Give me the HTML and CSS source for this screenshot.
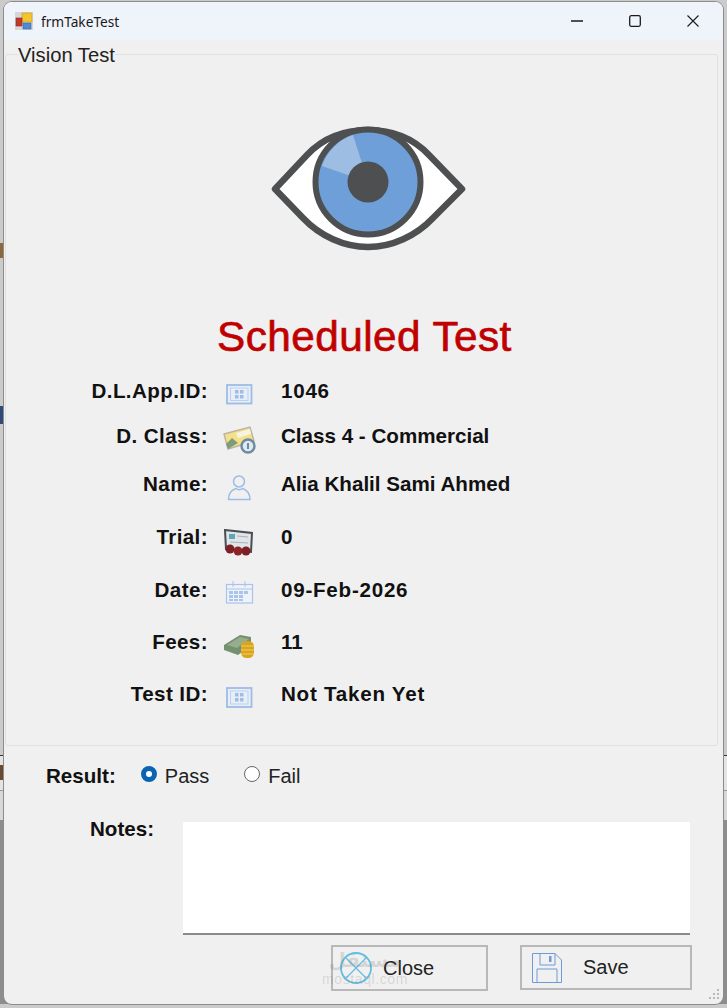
FILE: index.html
```html
<!DOCTYPE html>
<html lang="en">
<head>
<meta charset="utf-8">
<title>frmTakeTest</title>
<link rel="stylesheet" href="styles.css">
</head>
<body>
<div class="desktop">
  <div class="bg-band bg-band-light"></div>
  <div class="bg-band bg-band-mid"></div>
  <div class="bg-band bg-band-dark"></div>
  <div class="bg-frag bg-frag-a"></div>
  <div class="bg-frag bg-frag-b"></div>
  <div class="bg-frag bg-frag-c"></div>

  <main class="window">
    <header class="titlebar">
      <svg class="app-icon" viewBox="0 0 18 18">
        <rect x="0" y="0" width="18" height="18" fill="#d6d6d6"/>
        <rect x="7" y="1" width="10" height="9" fill="#f4c430" stroke="#c99a1a" stroke-width=".6"/>
        <rect x="1" y="6" width="6" height="8" fill="#c0392b" stroke="#8e2a20" stroke-width=".6"/>
        <rect x="8" y="11" width="8" height="6" fill="#4f8ad6" stroke="#35669f" stroke-width=".6"/>
      </svg>
      <span class="app-title">frmTakeTest</span>
      <div class="controls">
        <svg class="ctl ctl-min" viewBox="0 0 12 12"><path d="M0 6H12" stroke="#1a1a1a" stroke-width="1.3"/></svg>
        <svg class="ctl ctl-max" viewBox="0 0 12 12"><rect x=".7" y=".7" width="10.6" height="10.6" rx="1.5" fill="none" stroke="#1a1a1a" stroke-width="1.3"/></svg>
        <svg class="ctl ctl-close" viewBox="0 0 12 12"><path d="M.5 .5L11.5 11.5M11.5 .5L.5 11.5" stroke="#1a1a1a" stroke-width="1.1"/></svg>
      </div>
    </header>

    <fieldset class="group">
      <legend class="group-title">Vision Test</legend>

      <svg class="eye" viewBox="268 124 200 130">
        <path d="M275 189 L307 155 C323 138 345 130 368 130 C391 130 413 138 429 155 L462 189 L433 218 C416 236 392 247 368 247 C344 247 320 236 303 218 Z" fill="#fff" stroke="#4d4f51" stroke-width="6.500" stroke-linejoin="round"/>
        <circle cx="368" cy="182" r="52.500" fill="#6f9fd8" stroke="#4d4f51" stroke-width="6"/>
        <path d="M368 182 L353 135 A49.500 49.500 0 0 0 322 166 Z" fill="#9dbde3"/>
        <circle cx="368" cy="182" r="20.500" fill="#4d4f51"/>
      </svg>

      <h1 class="heading">Scheduled Test</h1>

      <div class="info">
        <span class="info-label">D.L.App.ID:</span>
        <svg class="info-icon" viewBox="222 378 34 32">
          <rect x="227" y="385" width="24.500" height="18.500" fill="#e8eef7" stroke="#9dbce6" stroke-width="1.800"/>
          <rect x="230.500" y="388" width="17.500" height="12.500" fill="none" stroke="#bdd1ec"/>
          <g fill="#9dbce6"><rect x="235" y="390" width="3.500" height="3.500"/><rect x="240" y="390" width="3.500" height="3.500"/><rect x="235" y="395" width="3.500" height="3.500"/><rect x="240" y="395" width="3.500" height="3.500"/></g>
        </svg>
        <span class="info-value info-value-wide">1046</span>

        <span class="info-label">D. Class:</span>
        <svg class="info-icon" viewBox="222 423 34 32">
          <path d="M224 434 L250 427 L254 441 L228 449 Z" fill="#f5e08a" stroke="#b8b3a3" stroke-width="1.400"/>
          <path d="M226 444 L232 438 L238 443 L228 449 Z" fill="#7f9c78"/>
          <path d="M236 433 L250 429 L251 434 L238 438 Z" fill="#f7f3df"/>
          <circle cx="248" cy="446" r="6.500" fill="#dfe9f2" stroke="#6f8aa0" stroke-width="2.400"/>
          <rect x="247" y="443" width="2" height="6" fill="#6f8aa0"/>
        </svg>
        <span class="info-value">Class 4 - Commercial</span>

        <span class="info-label">Name:</span>
        <svg class="info-icon" viewBox="222 471 34 32">
          <circle cx="239" cy="481.500" r="5.500" fill="none" stroke="#9dbce6" stroke-width="1.500"/>
          <path d="M228.500 499.500 C228.500 492 233 489.500 236 488.500 C238 490 240.500 490 242.500 488.500 C245.500 489.500 250 492 250 499.500 Z" fill="none" stroke="#9dbce6" stroke-width="1.500"/>
        </svg>
        <span class="info-value">Alia Khalil Sami Ahmed</span>

        <span class="info-label">Trial:</span>
        <svg class="info-icon" viewBox="222 524 34 32">
          <path d="M225 530 L252 533 L251 552 L226 549 Z" fill="#dfe5e8" stroke="#4a4e52" stroke-width="2"/>
          <rect x="229" y="534" width="6" height="5" fill="#5fa6b8"/>
          <path d="M237 536 L248 537 M230 542 L248 543" stroke="#aab3b8"/>
          <circle cx="230" cy="549" r="4.500" fill="#7d1f24"/>
          <circle cx="238" cy="551" r="4.500" fill="#8a2428"/>
          <circle cx="246" cy="551" r="4.500" fill="#7d1f24"/>
        </svg>
        <span class="info-value">0</span>

        <span class="info-label">Date:</span>
        <svg class="info-icon" viewBox="222 577 34 32">
          <rect x="226.500" y="584.500" width="26" height="18.500" fill="#eef3fa" stroke="#a9c4e8" stroke-width="1.200"/>
          <path d="M226.500 589H252.500M233 581V587M245 581V587" stroke="#a9c4e8"/>
          <g fill="#a9c4e8"><rect x="229" y="591" width="4" height="3"/><rect x="234" y="591" width="4" height="3"/><rect x="239" y="591" width="4" height="3"/><rect x="244" y="591" width="4" height="3"/><rect x="229" y="595" width="4" height="3"/><rect x="234" y="595" width="4" height="3"/><rect x="239" y="595" width="4" height="3"/><rect x="229" y="599" width="4" height="2"/><rect x="234" y="599" width="4" height="2"/><rect x="239" y="599" width="4" height="2"/></g>
        </svg>
        <span class="info-value info-value-wide">09-Feb-2026</span>

        <span class="info-label">Fees:</span>
        <svg class="info-icon" viewBox="222 629 34 32">
          <path d="M224 645 L240 635 L251 637 L251 645 L238 655 L224 650 Z" fill="#74906f"/>
          <path d="M227 645 L240 637 L249 639 L237 648 Z" fill="#96ad8e"/>
          <rect x="241" y="641" width="13" height="17" rx="5.500" fill="#d9a520"/>
          <path d="M241 646 H254 M241 650 H254 M241 654 H254" stroke="#f2ce5a"/>
        </svg>
        <span class="info-value">11</span>

        <span class="info-label">Test ID:</span>
        <svg class="info-icon" viewBox="222 681 34 32">
          <rect x="227" y="688" width="24.500" height="19" fill="#e8eef7" stroke="#9dbce6" stroke-width="1.800"/>
          <rect x="230.500" y="691" width="17.500" height="13" fill="none" stroke="#bdd1ec"/>
          <g fill="#9dbce6"><rect x="235" y="693" width="3.500" height="3.500"/><rect x="240" y="693" width="3.500" height="3.500"/><rect x="235" y="698" width="3.500" height="3.500"/><rect x="240" y="698" width="3.500" height="3.500"/></g>
        </svg>
        <span class="info-value info-value-wide">Not Taken Yet</span>
      </div>
    </fieldset>

    <div class="result-row">
      <span class="field-label">Result:</span>
      <span class="radio radio-on"></span><span class="radio-text radio-text-pass">Pass</span>
      <span class="radio"></span><span class="radio-text">Fail</span>
    </div>

    <div class="notes-row">
      <span class="field-label notes-label">Notes:</span>
      <div class="notes-box"></div>
    </div>

    <div class="actions">
      <div class="btn btn-close">
        <svg class="btn-icon-close" viewBox="0 0 32 32">
          <circle cx="16" cy="16" r="15" fill="none" stroke="#62bde0" stroke-width="1.800"/>
          <path d="M6 6L26 26M26 6L6 26" stroke="#62bde0" stroke-width="1.200"/>
        </svg>
        <span>Close</span>
      </div>
      <div class="btn btn-save">
        <svg class="btn-icon-save" viewBox="0 0 30 30">
          <path d="M.5 .5H23L29.500 7V29.500H.5Z" fill="none" stroke="#6c9bd8"/>
          <path d="M8 .5V12H23V.5M5 29.500V16H25V29.500" fill="none" stroke="#6c9bd8"/>
          <rect x="17" y="3" width="2.500" height="6" fill="#6c9bd8"/>
        </svg>
        <span>Save</span>
      </div>
    </div>

    <div class="watermark">
      <span class="wm-ar">مستقل</span>
      <span class="wm-en">mostaql.com</span>
    </div>

    <svg class="grip" viewBox="0 0 12 12">
      <g fill="#b8b8b8"><rect x="9" y="0" width="2" height="2"/><rect x="5" y="4" width="2" height="2"/><rect x="9" y="4" width="2" height="2"/><rect x="1" y="8" width="2" height="2"/><rect x="5" y="8" width="2" height="2"/><rect x="9" y="8" width="2" height="2"/></g>
    </svg>
  </main>
</div>
</body>
</html>
```
FILE: styles.css
```css
* { box-sizing: border-box; }

html, body { margin: 0; padding: 0; }

body {
  font-family: "Liberation Sans", Arial, sans-serif;
  color: #111;
}

.desktop {
  position: relative;
  width: 727px;
  height: 1008px;
  overflow: hidden;
  background: #cbcbcb;
}

.bg-band { position: absolute; left: 0; right: 0; }
.bg-band-light { top: 755px; height: 35px; background: #e4e4e4; border-top: 1px solid #333; }
.bg-band-mid { top: 790px; height: 30px; background: #d8d8d8; border-top: 1px solid #999; }
.bg-band-dark { top: 820px; height: 184px; background: #8d8d8d; }

.bg-frag { position: absolute; left: 0; width: 3px; }
.bg-frag-a { top: 243px; height: 15px; background: #8a6a3c; }
.bg-frag-b { top: 406px; height: 18px; background: #2f4a78; }
.bg-frag-c { top: 765px; height: 15px; background: #6a4a30; }

.window {
  position: absolute;
  left: 4px;
  top: 2px;
  width: 719px;
  height: 1002px;
  background: #f0f0f0;
  border-radius: 8px;
  box-shadow: 0 0 0 1px #8c8c8c;
  overflow: hidden;
}

.titlebar {
  display: flex;
  align-items: center;
  height: 38px;
  padding: 0 0 0 11px;
  background: #eff4fa;
}

.app-icon { width: 18px; height: 18px; flex: none; }

.app-title {
  margin-left: 8px;
  font-family: "Noto Sans", sans-serif;
  font-size: 13.700px;
  color: #1a1a1a;
}

.controls {
  display: flex;
  align-items: center;
  margin-left: auto;
  padding-right: 24px;
  gap: 46px;
}

.ctl { width: 12px; height: 12px; display: block; }

.group {
  display: block;
  margin: 2px 0 0 1px;
  padding: 0;
  width: 713px;
  height: 704px;
  border: 1px solid #e0e0e0;
  border-radius: 3px;
  min-width: 0;
}

.group-title {
  margin-left: 12px;
  padding: 2px 0 0;
  font-size: 20.200px;
  line-height: 23px;
  color: #222;
}

.eye {
  display: block;
  width: 200px;
  height: 130px;
  margin: 57px 0 0 262px;
}

.heading {
  margin: 60px 0 9px;
  padding-left: 211px;
  font-size: 42.300px;
  letter-spacing: .45px;
  line-height: 46px;
  font-weight: 400;
  color: #c00000;
  -webkit-text-stroke: .7px #c00000;
}

.info {
  display: grid;
  grid-template-columns: 202px 34px 1fr;
  grid-template-rows: 44px 46px 50px 56px 50px 54px 50px;
  column-gap: 14px;
  align-items: center;
}

.info-label {
  font-size: 20.600px;
  font-weight: 700;
  letter-spacing: .4px;
  text-align: right;
  color: #111;
}

.info-icon {
  display: block;
  width: 34px;
  height: 32px;
  margin-top: 6px;
  align-self: center;
}

.info-value {
  margin-left: 11px;
  font-size: 20.600px;
  font-weight: 700;
  color: #111;
}

.info-value-wide { letter-spacing: .75px; }

.result-row {
  display: flex;
  align-items: center;
  height: 40px;
  margin-top: 10px;
  padding-left: 42px;
}

.field-label {
  font-size: 20.600px;
  font-weight: 700;
  color: #111;
}

.radio {
  flex: none;
  width: 16px;
  height: 16px;
  margin-top: -4px;
  margin-left: 25px;
  border: 1.500px solid #666;
  border-radius: 50%;
  background: #fff;
}

.radio-on {
  border: 5px solid #0a64b4;
  background: #fff;
}

.radio-text {
  margin-left: 8px;
  font-size: 20px;
  color: #222;
}

.radio-text-pass { margin-right: 10px; }

.notes-row {
  display: flex;
  align-items: flex-start;
  margin-top: 26px;
  padding-left: 86px;
}

.notes-label {
  width: 93px;
  flex: none;
  line-height: 14px;
}

.notes-box {
  width: 507px;
  height: 113px;
  background: #fff;
  border-bottom: 2px solid #8a8a8a;
}

.actions {
  display: flex;
  align-items: flex-start;
  gap: 32px;
  margin-top: 10px;
  padding-left: 327px;
}

.btn {
  display: flex;
  align-items: center;
  border: 2px solid #b8b8b8;
  font-size: 20px;
  color: #222;
}

.btn-close {
  width: 157px;
  height: 46px;
  padding-left: 7px;
  gap: 11px;
}

.btn-save {
  width: 172px;
  height: 45px;
  padding-left: 10px;
  gap: 21px;
}

.btn-icon-close { width: 32px; height: 32px; flex: none; }
.btn-icon-save { width: 30px; height: 30px; flex: none; }

.watermark {
  position: absolute;
  left: 316px;
  top: 946px;
  width: 90px;
  display: flex;
  flex-direction: column;
  align-items: center;
  color: rgba(120, 120, 120, .22);
  pointer-events: none;
}

.wm-ar {
  font-family: "DejaVu Sans", sans-serif;
  font-size: 20px;
  font-weight: 700;
  line-height: 24px;
}

.wm-en {
  font-size: 14px;
  line-height: 14px;
  letter-spacing: .6px;
}

.grip {
  position: absolute;
  right: 3px;
  bottom: 3px;
  width: 12px;
  height: 12px;
}
```
